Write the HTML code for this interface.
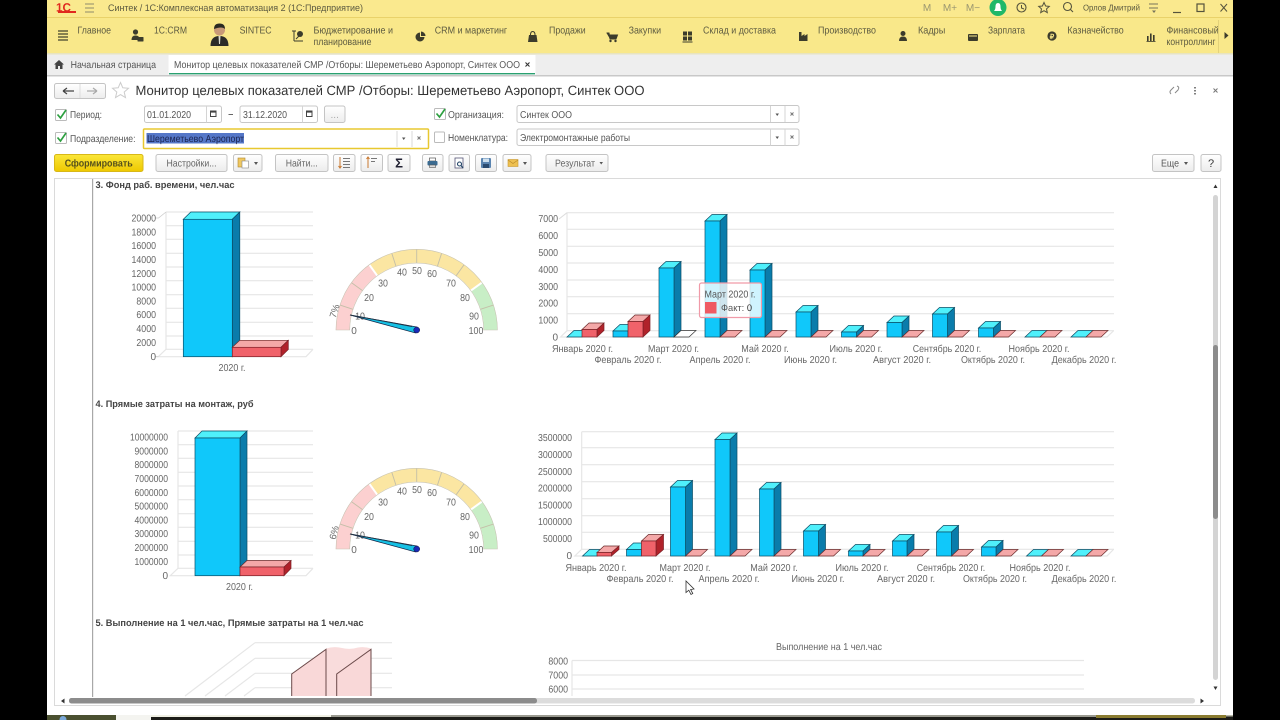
<!DOCTYPE html>
<html><head><meta charset="utf-8"><title>Монитор целевых показателей СМР</title>
<style>
html,body{margin:0;padding:0;background:#000;width:1280px;height:720px;overflow:hidden}
svg{display:block;filter:blur(.35px)}
text{font-family:"Liberation Sans",sans-serif;font-size:10px;fill:#555;text-rendering:geometricPrecision}
.p text,text.p{fill:#5c5a40}
.a{fill:#666;font-size:10px}
.a text{fill:#666;lengthAdjust:spacingAndGlyphs}
.e{text-anchor:end}.m{text-anchor:middle}
.t{font-weight:bold;fill:#444;font-size:9.5px}
.b{fill:url(#btn);stroke:#c4c4c4}
.i{fill:#fff;stroke:#c8c8c8}
.gl{stroke:#e6e6e6;stroke-width:1.2;fill:none}
.c1{fill:#10c8fa;stroke:#0b4d66;stroke-width:.7}
.c2{fill:#0a7cab;stroke:#0b4d66;stroke-width:.7}
.c3{fill:#4ff0fb;stroke:#0b4d66;stroke-width:.7}
.r1{fill:#f0626a;stroke:#7a2026;stroke-width:.7}
.r2{fill:#b0222a;stroke:#7a2026;stroke-width:.7}
.r3{fill:#f4a8a8;stroke:#6a2a2a;stroke-width:.7}
</style></head><body>
<svg width="1280" height="720" viewBox="0 0 1280 720" xmlns="http://www.w3.org/2000/svg">
<defs>
<linearGradient id="btn" x1="0" y1="0" x2="0" y2="1"><stop offset="0" stop-color="#fff"/><stop offset="1" stop-color="#ececec"/></linearGradient>
<linearGradient id="ybtn" x1="0" y1="0" x2="0" y2="1"><stop offset="0" stop-color="#fbe73a"/><stop offset="1" stop-color="#eec800"/></linearGradient>
<polygon id="fp" class="r3" points="0,0 7,-6.5 22,-6.5 15,0"/>
<polygon id="fc" class="c3" points="0,0 7,-6.5 22,-6.5 15,0"/>
<g id="gauge">
<path d="M342.7 330A74 74 0 0 1 373.2 270.1" fill="none" stroke="#fcd0d0" stroke-width="13.6"/>
<path d="M373.2 270.1A74 74 0 0 1 476.6 286.5" fill="none" stroke="#fbe6a2" stroke-width="13.6"/>
<path d="M476.6 286.5A74 74 0 0 1 490.7 330" fill="none" stroke="#c8eec6" stroke-width="13.6"/>
<path d="M353 309.3L340 305.1M362.5 290.6L351.4 282.6M396 266.3L391.8 253.3M416.7 263V249.3M437.4 266.3L441.6 253.3M456.1 275.8L464.1 264.7M480.4 309.3L493.4 305.1" stroke="#c4bfa8" stroke-width=".9"/>
<path d="M377.3 275.8L369.3 264.7M470.9 290.6L482 282.6" stroke="#fff" stroke-width="2"/>
<path d="M336 330A80.7 80.7 0 0 1 497.4 330H483.7A67 67 0 0 0 349.7 330Z" fill="none" stroke="#c8c4b4" stroke-width=".6"/>
</g>
</defs>

<!-- frame -->
<rect x="47" y="0" width="1186" height="715" fill="#fff"/>
<rect x="47" y="715" width="1186" height="1.5" fill="#b8b8a8"/>
<rect x="47" y="716.5" width="1186" height="3.5" fill="#1c1c18"/>
<rect x="47" y="715" width="69" height="5" fill="#4a5030"/>
<circle cx="63" cy="719.5" r="3.5" fill="#7aa8d8"/>
<rect x="116" y="715" width="35" height="5" fill="#f4f4f0"/>
<rect x="151" y="715" width="180" height="2" fill="#f0f0e4"/>
<rect x="331" y="715" width="765" height="2" fill="#9a9a90"/>
<rect x="1096" y="715" width="130" height="3" fill="#8a7c30"/>

<!-- title bar -->
<rect x="47" y="0" width="1186" height="17.5" fill="#fae98e"/>
<rect x="47" y="17" width="1186" height="1" fill="#e9d26a"/>
<text x="56" y="11.5" style="font-size:12px;font-weight:bold;fill:#e0281e" textLength="15" lengthAdjust="spacingAndGlyphs">1С</text>
<rect x="58" y="11" width="18" height="2" fill="#e0281e"/>
<path d="M85 4H94M85 8H94M85 12H94" stroke="#8d8a6c" stroke-width="1"/>
<text class="p" x="108" y="11" textLength="255" lengthAdjust="spacingAndGlyphs" style="font-size:9.5px">Синтек / 1С:Комплексная автоматизация 2  (1С:Предприятие)</text>
<text x="927" y="11" class="m" style="fill:#9a9670">M</text>
<text x="950" y="11" class="m" style="fill:#9a9670">M+</text>
<text x="973" y="11" class="m" style="fill:#9a9670">M−</text>
<circle cx="998" cy="7.5" r="8.5" fill="#20b868"/>
<path d="M994 11Q995.5 9.5 995.5 6.5Q995.5 3 998 3Q1000.5 3 1000.5 6.5Q1000.5 9.5 1002 11Z" fill="#fff"/>
<circle cx="1021.5" cy="7.5" r="4.5" fill="none" stroke="#55533c" stroke-width="1.1"/><path d="M1021.5 5V8L1024 9" stroke="#55533c" fill="none"/>
<polygon points="1044,2.5 1045.6,6 1049.3,6.4 1046.5,8.9 1047.3,12.6 1044,10.7 1040.7,12.6 1041.5,8.9 1038.7,6.4 1042.4,6" fill="none" stroke="#55533c"/>
<circle cx="1067.5" cy="6.5" r="4" fill="none" stroke="#55533c" stroke-width="1.1"/><path d="M1070.5 9.5L1073 12" stroke="#55533c" stroke-width="1.1"/>
<text class="p" x="1083" y="10.5" textLength="57" lengthAdjust="spacingAndGlyphs" style="font-size:8.5px">Орлов Дмитрий</text>
<path d="M1149 4H1158M1149 8H1158" stroke="#77745a"/><path d="M1152 10.5H1156L1154 13Z" fill="#77745a"/>
<path d="M1173 12.5H1181" stroke="#55533c" stroke-width="1.2"/>
<rect x="1197" y="4" width="7" height="7.5" fill="none" stroke="#55533c" stroke-width="1.2"/>
<path d="M1220.5 4L1227 11.5M1227 4L1220.5 11.5" stroke="#55533c" stroke-width="1"/>

<!-- sections panel -->
<rect x="47" y="18" width="1186" height="35.5" fill="#f9e88a"/>
<rect x="47" y="53" width="1186" height="1.5" fill="#e8e4c0"/>
<path d="M58 33H68M58 36H68M58 39H68M58 42H68" stroke="#44442f" stroke-width="1.3" transform="translate(0,-2)"/>
<g class="p">
<text x="77.5" y="33.5" textLength="33.5" lengthAdjust="spacingAndGlyphs">Главное</text>
<text x="154" y="33.5" textLength="33" lengthAdjust="spacingAndGlyphs">1С:CRM</text>
<text x="239.6" y="33.5" textLength="32" lengthAdjust="spacingAndGlyphs">SINTEC</text>
<text x="313.5" y="33.5" textLength="79.5" lengthAdjust="spacingAndGlyphs">Бюджетирование и</text>
<text x="313.5" y="45" textLength="58" lengthAdjust="spacingAndGlyphs">планирование</text>
<text x="434.7" y="33.5" textLength="72.5" lengthAdjust="spacingAndGlyphs">CRM и маркетинг</text>
<text x="549" y="33.5" textLength="36.7" lengthAdjust="spacingAndGlyphs">Продажи</text>
<text x="628.6" y="33.5" textLength="32.5" lengthAdjust="spacingAndGlyphs">Закупки</text>
<text x="703" y="33.5" textLength="73" lengthAdjust="spacingAndGlyphs">Склад и доставка</text>
<text x="818" y="33.5" textLength="58" lengthAdjust="spacingAndGlyphs">Производство</text>
<text x="918" y="33.5" textLength="27.3" lengthAdjust="spacingAndGlyphs">Кадры</text>
<text x="988" y="33.5" textLength="37" lengthAdjust="spacingAndGlyphs">Зарплата</text>
<text x="1067.4" y="33.5" textLength="56.3" lengthAdjust="spacingAndGlyphs">Казначейство</text>
<text x="1166.5" y="33.5" textLength="52.3" lengthAdjust="spacingAndGlyphs">Финансовый</text>
<text x="1166.5" y="45" textLength="49" lengthAdjust="spacingAndGlyphs">контроллинг</text>
</g>
<!-- panel icons -->
<g fill="#3c3c2c">
<circle cx="135.5" cy="32" r="2.6"/><path d="M131.5 40Q131.5 35.5 135.5 35.5Q138 35.5 139 37V40Z"/><rect x="137.5" y="37" width="6" height="4.5" rx=".5"/>
<circle cx="219.5" cy="30" r="5.5" fill="#c89a78"/><path d="M214 29Q214 23.5 219.5 23.5Q225 23.5 225 29Q222 26 214 29Z" fill="#2a2a22"/><path d="M210.5 46Q210.5 36 219.5 36Q228.5 36 228.5 46Z" fill="#2c2c28"/><path d="M218.5 36H220.5L220 44H219Z" fill="#dcdcd0"/>
<path d="M294 31V41M294 41H303M296 31H292" stroke="#3c3c2c" stroke-width="1" fill="none"/><circle cx="300" cy="34" r="3"/><path d="M296 39L299 36" stroke="#3c3c2c"/>
<path d="M420 32.5A4.5 4.5 0 1 0 424.5 37H420Z"/><path d="M421 31.5A4.5 4.5 0 0 1 425.5 36H421Z"/>
<path d="M529 35H536.5L537.5 42H528Z"/><path d="M530.5 35Q530.5 31.5 532.7 31.5Q535 31.5 535 35" fill="none" stroke="#3c3c2c"/>
<path d="M606.5 33H609L610 39H616L617.5 35H609.5L610 39" stroke="#3c3c2c" fill="#3c3c2c"/><circle cx="610.5" cy="41" r="1.2"/><circle cx="615.5" cy="41" r="1.2"/>
<rect x="683" y="31.5" width="4" height="4"/><rect x="688" y="31.5" width="4" height="4"/><rect x="683" y="36.5" width="4" height="4"/><rect x="688" y="36.5" width="4" height="4"/><rect x="682.5" y="41.5" width="10" height="1"/>
<path d="M799 41V32H801.5V36L804.5 34V36L807.5 34V41Z"/>
<circle cx="903" cy="33.5" r="2.5"/><path d="M899 41Q899 36.5 903 36.5Q907 36.5 907 41Z"/>
<rect x="968" y="34" width="10" height="7" rx="1"/><rect x="969" y="35.5" width="8" height="1" fill="#f9e88a"/>
<circle cx="1052" cy="36" r="4.6"/><text x="1052" y="39" class="m" style="font-size:7px;font-weight:bold;fill:#f9e88a">₽</text>
<rect x="1147" y="36" width="1.6" height="5"/><rect x="1150" y="33.5" width="1.6" height="7.5"/><rect x="1153" y="35" width="1.6" height="6"/><rect x="1146.5" y="41" width="9" height=".8"/>
</g>
<rect x="1218" y="20" width="1" height="33" fill="#e3d27a"/>
<path d="M1224.5 32L1228.5 35.5L1224.5 39Z" fill="#3c3c2c"/>

<!-- tabs -->
<rect x="47" y="54.5" width="1186" height="21" fill="#eeeeee"/>
<rect x="47" y="75" width="1186" height="1.5" fill="#c8c8c8"/>
<path d="M59 60L64 64.5H62.5V69H60V66H58V69H55.5V64.5H54Z" fill="#444"/>
<text x="70.6" y="68" textLength="85.4" lengthAdjust="spacingAndGlyphs">Начальная страница</text>
<rect x="168.5" y="55" width="367" height="20" fill="#fff"/>
<rect x="169" y="73" width="366" height="1.4" fill="#2aa070"/>
<text x="174" y="68" textLength="346" lengthAdjust="spacingAndGlyphs">Монитор целевых показателей СМР /Отборы: Шереметьево Аэропорт, Синтек ООО</text>
<path d="M525.5 62.5L529.5 66.5M529.5 62.5L525.5 66.5" stroke="#333" stroke-width="1.1"/>

<!-- title row -->
<rect x="54.5" y="83.5" width="51" height="15" rx="2" class="b"/>
<path d="M80 84V98" stroke="#ddd"/>
<path d="M63 91H74M63 91L67 88M63 91L67 94" stroke="#444" stroke-width="1.2" fill="none"/>
<path d="M87 91H97M97 91L93 88M97 91L93 94" stroke="#aaa" stroke-width="1.2" fill="none"/>
<polygon points="120.5,82.5 122.8,87.8 128.5,88.3 124.2,92 125.5,97.6 120.5,94.6 115.5,97.6 116.8,92 112.5,88.3 118.2,87.8" fill="none" stroke="#ccc"/>
<text x="135.5" y="95" textLength="509" lengthAdjust="spacingAndGlyphs" style="font-size:13.5px;fill:#333">Монитор целевых показателей СМР /Отборы: Шереметьево Аэропорт, Синтек ООО</text>
<path d="M1171 94Q1169 92 1171 90L1174 87M1177 86Q1180 87 1178 90L1175 93" fill="none" stroke="#888"/>
<path d="M1195 87V88.5M1195 90V91.5M1195 93V94.5" stroke="#555" stroke-width="1.5"/>
<path d="M1213.5 88.5L1217.5 92.5M1217.5 88.5L1213.5 92.5" stroke="#777"/>

<!-- row 1 -->
<rect x="55.5" y="109.5" width="11" height="11" rx="1" fill="#fff" stroke="#bbb"/>
<path d="M57.5 114.5L60.5 118L66 110" fill="none" stroke="#2da040" stroke-width="1.7"/>
<text x="70" y="118" textLength="32" lengthAdjust="spacingAndGlyphs">Период:</text>
<rect x="144.5" y="106" width="77" height="16.5" rx="2" class="i"/>
<path d="M206.5 106V122.5" stroke="#d4d4d4"/>
<rect x="210.5" y="111" width="5.5" height="5.5" fill="none" stroke="#444"/><rect x="210.5" y="111" width="5.5" height="1.6" fill="#444"/>
<text x="147" y="118" textLength="44" lengthAdjust="spacingAndGlyphs">01.01.2020</text>
<path d="M228.5 114.5H233" stroke="#666"/>
<rect x="240" y="106" width="77.5" height="16.5" rx="2" class="i"/>
<path d="M302.5 106V122.5" stroke="#d4d4d4"/>
<rect x="306.5" y="111" width="5.5" height="5.5" fill="none" stroke="#444"/><rect x="306.5" y="111" width="5.5" height="1.6" fill="#444"/>
<text x="243" y="118" textLength="44" lengthAdjust="spacingAndGlyphs">31.12.2020</text>
<rect x="324.5" y="106" width="20.5" height="16.5" rx="2" class="b"/>
<text x="334.7" y="118" class="m" style="fill:#aaa">...</text>
<rect x="434.5" y="108.5" width="11" height="11" rx="1" fill="#fff" stroke="#bbb"/>
<path d="M436.5 113.5L439.5 117L445 109" fill="none" stroke="#2da040" stroke-width="1.7"/>
<text x="448" y="118" textLength="56" lengthAdjust="spacingAndGlyphs">Организация:</text>
<rect x="517" y="105.5" width="282" height="17" rx="2" class="i"/>
<path d="M770.5 106V122M785 106V122" stroke="#d4d4d4"/>
<path d="M775.5 113.5H779L777.2 116Z" fill="#555"/>
<path d="M790.5 112.5L793.5 115.5M793.5 112.5L790.5 115.5" stroke="#777"/>
<text x="520" y="118" textLength="52" lengthAdjust="spacingAndGlyphs">Синтек ООО</text>

<!-- row 2 -->
<rect x="55.5" y="132.5" width="11" height="11" rx="1" fill="#fff" stroke="#bbb"/>
<path d="M57.5 137.5L60.5 141L66 133" fill="none" stroke="#2da040" stroke-width="1.7"/>
<text x="70" y="142" textLength="65.5" lengthAdjust="spacingAndGlyphs">Подразделение:</text>
<rect x="143.5" y="129" width="285" height="19.5" rx="1" fill="#fff" stroke="#e8c830" stroke-width="1.5"/>
<rect x="146.5" y="133" width="97.5" height="10.5" fill="#5577c8"/>
<text x="147" y="141.8" textLength="97" lengthAdjust="spacingAndGlyphs" style="fill:#1a2450">Шереметьево Аэропорт</text>
<path d="M397 131V147M412 131V147" stroke="#d8d8d8"/>
<path d="M402 137.5H405.5L403.7 140Z" fill="#555"/>
<path d="M417.5 136.5L420.5 139.5M420.5 136.5L417.5 139.5" stroke="#777"/>
<rect x="434.5" y="132" width="10" height="10.5" rx="1" fill="#fff" stroke="#bbb"/>
<text x="448" y="141" textLength="60" lengthAdjust="spacingAndGlyphs">Номенклатура:</text>
<rect x="517" y="129" width="282" height="16.5" rx="2" class="i"/>
<path d="M770.5 129V145.5M785 129V145.5" stroke="#d4d4d4"/>
<path d="M775.5 136.5H779L777.2 139Z" fill="#555"/>
<path d="M790.5 135.5L793.5 138.5M793.5 135.5L790.5 138.5" stroke="#777"/>
<text x="520" y="141" textLength="110" lengthAdjust="spacingAndGlyphs">Электромонтажные работы</text>

<!-- toolbar -->
<rect x="54.5" y="154.5" width="88.5" height="17" rx="2" fill="url(#ybtn)" stroke="#d8b818"/>
<text x="98.7" y="166.5" class="m" textLength="68" lengthAdjust="spacingAndGlyphs" style="font-weight:bold;fill:#55501c">Сформировать</text>
<rect x="156" y="154.5" width="71" height="17" rx="2" class="b"/>
<text x="191.5" y="166.5" class="m" textLength="50" lengthAdjust="spacingAndGlyphs" style="fill:#666">Настройки...</text>
<rect x="233.5" y="154.5" width="28.5" height="17" rx="2" class="b"/>
<rect x="238" y="158" width="7" height="9" fill="#f0c860" stroke="#b08830" stroke-width=".6"/><rect x="242" y="161" width="6.5" height="7" fill="#fff" stroke="#888" stroke-width=".6"/>
<path d="M254 162H258L256 165Z" fill="#555"/>
<rect x="275.5" y="154.5" width="52.5" height="17" rx="2" class="b"/>
<text x="301.7" y="166.5" class="m" textLength="32" lengthAdjust="spacingAndGlyphs" style="fill:#666">Найти...</text>
<rect x="333.5" y="154.5" width="21.5" height="17" rx="2" class="b"/>
<path d="M340 157V168M338.5 166L340 168L341.5 166" stroke="#c87830" fill="none"/><path d="M343 158.5H350M343 161.5H350M343 164.5H350M343 167.5H350" stroke="#777"/>
<rect x="361" y="154.5" width="21.5" height="17" rx="2" class="b"/>
<path d="M368 157V168M366.5 159L368 157L369.5 159" stroke="#c87830" fill="none"/><path d="M371 158.5H377M371 161.5H375" stroke="#777"/>
<rect x="388" y="154.5" width="22" height="17" rx="2" class="b"/>
<text x="399" y="167.5" class="m" style="font-size:13px;font-weight:bold;fill:#223">Σ</text>
<rect x="422.5" y="154.5" width="20.5" height="17" rx="2" class="b"/>
<rect x="429.5" y="158" width="6" height="3" fill="#fff" stroke="#555" stroke-width=".7"/><rect x="427.5" y="161" width="10" height="4.5" rx="1" fill="#3a6a90"/><rect x="429.5" y="165" width="6" height="2.5" fill="#ddd" stroke="#555" stroke-width=".6"/>
<rect x="449" y="154.5" width="20.5" height="17" rx="2" class="b"/>
<rect x="455" y="158" width="8" height="10" fill="#fff" stroke="#557" stroke-width=".8"/><circle cx="459.5" cy="164" r="2" fill="none" stroke="#246" stroke-width="1.1"/><path d="M461 165.5L463 168" stroke="#246" stroke-width="1.1"/>
<rect x="475.5" y="154.5" width="21" height="17" rx="2" class="b"/>
<rect x="481" y="158" width="10" height="10" rx="1" fill="#5a84b0"/><rect x="483" y="158.5" width="6" height="3.5" fill="#cfe0ee"/><rect x="483" y="164" width="6" height="4" fill="#2a4a70"/>
<rect x="503" y="154.5" width="28" height="17" rx="2" class="b"/>
<rect x="508" y="159.5" width="10" height="7" fill="#eec050" stroke="#c89830" stroke-width=".6"/><path d="M508 160L513 163.5L518 160" fill="none" stroke="#b88828" stroke-width=".7"/>
<path d="M523 162H527L525 165Z" fill="#555"/>
<rect x="546" y="154.5" width="62" height="17" rx="2" class="b"/>
<text x="555" y="166.5" textLength="40" lengthAdjust="spacingAndGlyphs" style="fill:#666">Результат</text>
<path d="M599.5 162H603L601.2 164.5Z" fill="#555"/>
<rect x="1152.5" y="154.5" width="41.5" height="17" rx="2" class="b"/>
<text x="1161" y="166.5" textLength="18" lengthAdjust="spacingAndGlyphs" style="fill:#555">Еще</text>
<path d="M1184 162H1188L1186 165Z" fill="#555"/>
<rect x="1201" y="154.5" width="20" height="17" rx="2" class="b"/>
<text x="1211" y="167" class="m" style="fill:#333;font-size:11px">?</text>

<!-- content frame -->
<rect x="54.5" y="178.5" width="1166" height="527" fill="#fff" stroke="#dadada"/>
<rect x="92" y="179" width="1.2" height="518" fill="#a8a8a8"/>

<!-- section titles -->
<text x="95.5" y="188" class="t" textLength="139" lengthAdjust="spacingAndGlyphs">3. Фонд раб. времени, чел.час</text>
<text x="95.5" y="407" class="t" textLength="158" lengthAdjust="spacingAndGlyphs">4. Прямые затраты на монтаж, руб</text>
<text x="95.5" y="626" class="t" textLength="268" lengthAdjust="spacingAndGlyphs">5. Выполнение на 1 чел.час, Прямые затраты на 1 чел.час</text>

<!-- left chart 1 -->
<g id="lg">
<path class="gl" d="M166 212H313M166 225.7H313M166 239.3H313M166 253.3H313M166 267H313M166 280.7H313M166 294.7H313M166 308.3H313M166 322.3H313M166 336H313M166 349.3H313"/>
<path class="gl" d="M166 212V349.3L158.3 356.7H306L313 349.3"/>
<path d="M155 218H158.5L166 212M155 356.7H158.5" fill="none" stroke="#ccc" stroke-width=".8"/>
</g>
<g class="a e">
<text x="156" y="221.5" textLength="24.5" lengthAdjust="spacingAndGlyphs">20000</text><text x="156" y="235.4" textLength="24.5" lengthAdjust="spacingAndGlyphs">18000</text><text x="156" y="249.2" textLength="24.5" lengthAdjust="spacingAndGlyphs">16000</text><text x="156" y="263" textLength="24.5" lengthAdjust="spacingAndGlyphs">14000</text><text x="156" y="276.8" textLength="24.5" lengthAdjust="spacingAndGlyphs">12000</text><text x="156" y="290.6" textLength="24.5" lengthAdjust="spacingAndGlyphs">10000</text><text x="156" y="304.4" textLength="19.6" lengthAdjust="spacingAndGlyphs">8000</text><text x="156" y="318.2" textLength="19.6" lengthAdjust="spacingAndGlyphs">6000</text><text x="156" y="332" textLength="19.6" lengthAdjust="spacingAndGlyphs">4000</text><text x="156" y="346" textLength="19.6" lengthAdjust="spacingAndGlyphs">2000</text><text x="156" y="360">0</text>
</g>
<polygon class="c3" points="183.3,219.3 190.8,212 239.8,212 232.3,219.3"/>
<polygon class="c2" points="232.3,219.3 239.8,212 239.8,349.5 232.3,356.7"/>
<rect class="c1" x="183.3" y="219.3" width="49" height="137.4"/>
<polygon class="r3" points="232.3,347.3 239.8,340.3 288.3,340.3 281,347.3"/>
<polygon class="r2" points="281,347.3 288.3,340.3 288.3,349.5 281,356.7"/>
<rect class="r1" x="232.3" y="347.3" width="48.7" height="9.4"/>
<text x="232" y="371" class="a m" textLength="27" lengthAdjust="spacingAndGlyphs">2020 г.</text>

<!-- gauge 1 -->
<use href="#gauge"/>
<g class="a m">
<text x="354" y="334">0</text><text x="360" y="319.5" textLength="9.8" lengthAdjust="spacingAndGlyphs">10</text><text x="369" y="301" textLength="9.8" lengthAdjust="spacingAndGlyphs">20</text><text x="383" y="286.5" textLength="9.8" lengthAdjust="spacingAndGlyphs">30</text><text x="402" y="275.5" textLength="9.8" lengthAdjust="spacingAndGlyphs">40</text><text x="417" y="274" textLength="9.8" lengthAdjust="spacingAndGlyphs">50</text><text x="432" y="277" textLength="9.8" lengthAdjust="spacingAndGlyphs">60</text><text x="451" y="286.5" textLength="9.8" lengthAdjust="spacingAndGlyphs">70</text><text x="465" y="301" textLength="9.8" lengthAdjust="spacingAndGlyphs">80</text><text x="474" y="319.5" textLength="9.8" lengthAdjust="spacingAndGlyphs">90</text><text x="476" y="334" textLength="14.7" lengthAdjust="spacingAndGlyphs">100</text>
</g>
<text transform="translate(335.5,318.5) rotate(-72)" style="font-size:9.5px;fill:#666">7%</text>
<polygon points="350,315 417,327 415.5,333" fill="#16c0e4" stroke="#124" stroke-width=".7"/>
<path d="M350 315L412 326.5" stroke="#234" stroke-width=".9"/>
<circle cx="416.7" cy="330" r="3" fill="#1a2ab8" stroke="#113" stroke-width=".5"/>

<!-- right chart 1 -->
<path class="gl" d="M567 212.7H1114M567 229.3H1114M567 246.3H1114M567 263H1114M567 280H1114M567 296.7H1114M567 313.7H1114M567 330.7H1114"/>
<path class="gl" d="M567 212.7V330.7L560.6 337H1107L1113.6 330.7"/>
<path d="M559 219L567 212.7" stroke="#ddd"/>
<g class="a e">
<text x="558" y="222" textLength="19.6" lengthAdjust="spacingAndGlyphs">7000</text><text x="558" y="239" textLength="19.6" lengthAdjust="spacingAndGlyphs">6000</text><text x="558" y="256" textLength="19.6" lengthAdjust="spacingAndGlyphs">5000</text><text x="558" y="273" textLength="19.6" lengthAdjust="spacingAndGlyphs">4000</text><text x="558" y="290" textLength="19.6" lengthAdjust="spacingAndGlyphs">3000</text><text x="558" y="306.5" textLength="19.6" lengthAdjust="spacingAndGlyphs">2000</text><text x="558" y="323.5" textLength="19.6" lengthAdjust="spacingAndGlyphs">1000</text><text x="558" y="340.5">0</text>
</g>
<use href="#fc" x="567" y="337"/>
<polygon class="r3" points="582,329.5 589,323 604,323 597,329.5"/><polygon class="r2" points="597,329.5 604,323 604,330.5 597,337"/><rect class="r1" x="582" y="329.5" width="15" height="7.5"/>
<polygon class="c3" points="613,331 620,324.5 635,324.5 628,331"/><rect class="c1" x="613" y="331" width="15" height="6"/>
<polygon class="r3" points="628,321.5 635,315 650,315 643,321.5"/><polygon class="r2" points="643,321.5 650,315 650,330.5 643,337"/><rect class="r1" x="628" y="321.5" width="15" height="15.5"/>
<polygon class="c3" points="659,268 666,261.5 681,261.5 674,268"/><polygon class="c2" points="674,268 681,261.5 681,330.5 674,337"/><rect class="c1" x="659" y="268" width="15" height="69"/>
<polygon points="674,337 681,330.5 696,330.5 689,337" fill="#fff" stroke="#333" stroke-width=".7"/>
<polygon class="c3" points="705,221 712,214.5 727,214.5 720,221"/><polygon class="c2" points="720,221 727,214.5 727,330.5 720,337"/><rect class="c1" x="705" y="221" width="15" height="116"/>
<use href="#fp" x="720" y="337"/>
<polygon class="c3" points="750,270 757,263.5 772,263.5 765,270"/><polygon class="c2" points="765,270 772,263.5 772,330.5 765,337"/><rect class="c1" x="750" y="270" width="15" height="67"/>
<use href="#fp" x="765" y="337"/>
<polygon class="c3" points="796,312 803,305.5 818,305.5 811,312"/><polygon class="c2" points="811,312 818,305.5 818,330.5 811,337"/><rect class="c1" x="796" y="312" width="15" height="25"/>
<use href="#fp" x="811" y="337"/>
<polygon class="c3" points="841.5,332 848.5,325.5 863.5,325.5 856.5,332"/><polygon class="c2" points="856.5,332 863.5,325.5 863.5,330.5 856.5,337"/><rect class="c1" x="841.5" y="332" width="15" height="5"/>
<use href="#fp" x="856.5" y="337"/>
<polygon class="c3" points="887,322.5 894,316 909,316 902,322.5"/><polygon class="c2" points="902,322.5 909,316 909,330.5 902,337"/><rect class="c1" x="887" y="322.5" width="15" height="14.5"/>
<use href="#fp" x="902" y="337"/>
<polygon class="c3" points="932.5,314 939.5,307.5 954.5,307.5 947.5,314"/><polygon class="c2" points="947.5,314 954.5,307.5 954.5,330.5 947.5,337"/><rect class="c1" x="932.5" y="314" width="15" height="23"/>
<use href="#fp" x="947.5" y="337"/>
<polygon class="c3" points="978.5,328 985.5,321.5 1000.5,321.5 993.5,328"/><polygon class="c2" points="993.5,328 1000.5,321.5 1000.5,330.5 993.5,337"/><rect class="c1" x="978.5" y="328" width="15" height="9"/>
<use href="#fp" x="993.5" y="337"/>
<use href="#fc" x="1025" y="337"/><use href="#fp" x="1040" y="337"/>
<use href="#fc" x="1071" y="337"/><use href="#fp" x="1086" y="337"/>
<rect x="699.5" y="283" width="62" height="34.5" rx="2" fill="#fff" fill-opacity=".8" stroke="#f09aa8" stroke-width="1.2"/>
<text x="704.5" y="297.5" textLength="51" lengthAdjust="spacingAndGlyphs" style="fill:#555">Март 2020 г.</text>
<rect x="705" y="302" width="11.5" height="11.5" fill="#ef5b63"/>
<text x="721" y="311" style="font-size:9.5px" textLength="31" lengthAdjust="spacingAndGlyphs">Факт: <tspan style="fill:#333">0</tspan></text>
<g class="a m">
<text x="582.5" y="352" textLength="61" lengthAdjust="spacingAndGlyphs">Январь 2020 г.</text><text x="673.5" y="352" textLength="51" lengthAdjust="spacingAndGlyphs">Март 2020 г.</text><text x="765" y="352" textLength="47.5" lengthAdjust="spacingAndGlyphs">Май 2020 г.</text><text x="856" y="352" textLength="53" lengthAdjust="spacingAndGlyphs">Июль 2020 г.</text><text x="947" y="352" textLength="68.5" lengthAdjust="spacingAndGlyphs">Сентябрь 2020 г.</text><text x="1039" y="352" textLength="61" lengthAdjust="spacingAndGlyphs">Ноябрь 2020 г.</text>
<text x="628" y="363" textLength="67" lengthAdjust="spacingAndGlyphs">Февраль 2020 г.</text><text x="720" y="363" textLength="61" lengthAdjust="spacingAndGlyphs">Апрель 2020 г.</text><text x="810.5" y="363" textLength="53" lengthAdjust="spacingAndGlyphs">Июнь 2020 г.</text><text x="902" y="363" textLength="58" lengthAdjust="spacingAndGlyphs">Август 2020 г.</text><text x="993" y="363" textLength="64" lengthAdjust="spacingAndGlyphs">Октябрь 2020 г.</text><text x="1084" y="363" textLength="64.7" lengthAdjust="spacingAndGlyphs">Декабрь 2020 г.</text>
</g>

<!-- left chart 2 -->
<g transform="translate(12,219)">
<path class="gl" d="M166 212H301M166 225.7H301M166 239.3H301M166 253.3H301M166 267H301M166 280.7H301M166 294.7H301M166 308.3H301M166 322.3H301M166 336H301M166 349.3H301"/>
<path class="gl" d="M166 212V349.3L158.3 356.7H294L301 349.3"/>
</g>
<g class="a e">
<text x="168" y="440.5" textLength="38" lengthAdjust="spacingAndGlyphs">10000000</text><text x="168" y="454.4" textLength="33.5" lengthAdjust="spacingAndGlyphs">9000000</text><text x="168" y="468.2" textLength="33.5" lengthAdjust="spacingAndGlyphs">8000000</text><text x="168" y="482" textLength="33.5" lengthAdjust="spacingAndGlyphs">7000000</text><text x="168" y="495.8" textLength="33.5" lengthAdjust="spacingAndGlyphs">6000000</text><text x="168" y="509.6" textLength="33.5" lengthAdjust="spacingAndGlyphs">5000000</text><text x="168" y="523.4" textLength="33.5" lengthAdjust="spacingAndGlyphs">4000000</text><text x="168" y="537.2" textLength="33.5" lengthAdjust="spacingAndGlyphs">3000000</text><text x="168" y="551" textLength="33.5" lengthAdjust="spacingAndGlyphs">2000000</text><text x="168" y="565" textLength="33.5" lengthAdjust="spacingAndGlyphs">1000000</text><text x="168" y="579">0</text>
</g>
<polygon class="c3" points="195,438 202,431 247,431 240,438"/>
<polygon class="c2" points="240,438 247,431 247,568.5 240,575.7"/>
<rect class="c1" x="195" y="438" width="45" height="137.7"/>
<polygon class="r3" points="240,567 247,560.5 291,560.5 284,567"/>
<polygon class="r2" points="284,567 291,560.5 291,568.5 284,575.7"/>
<rect class="r1" x="240" y="567" width="44" height="8.7"/>
<text x="239.5" y="590" class="a m" textLength="27" lengthAdjust="spacingAndGlyphs">2020 г.</text>

<!-- gauge 2 -->
<use href="#gauge" y="219"/>
<g class="a m">
<text x="354" y="553">0</text><text x="360" y="538.5" textLength="9.8" lengthAdjust="spacingAndGlyphs">10</text><text x="369" y="520" textLength="9.8" lengthAdjust="spacingAndGlyphs">20</text><text x="383" y="505.5" textLength="9.8" lengthAdjust="spacingAndGlyphs">30</text><text x="402" y="494.5" textLength="9.8" lengthAdjust="spacingAndGlyphs">40</text><text x="417" y="493" textLength="9.8" lengthAdjust="spacingAndGlyphs">50</text><text x="432" y="496" textLength="9.8" lengthAdjust="spacingAndGlyphs">60</text><text x="451" y="505.5" textLength="9.8" lengthAdjust="spacingAndGlyphs">70</text><text x="465" y="520" textLength="9.8" lengthAdjust="spacingAndGlyphs">80</text><text x="474" y="538.5" textLength="9.8" lengthAdjust="spacingAndGlyphs">90</text><text x="476" y="553" textLength="14.7" lengthAdjust="spacingAndGlyphs">100</text>
</g>
<text transform="translate(335.5,540) rotate(-76)" style="font-size:9.5px;fill:#666">6%</text>
<polygon points="350,534 417,546 415.5,552" fill="#16c0e4" stroke="#124" stroke-width=".7"/>
<path d="M350 534L412 545.5" stroke="#234" stroke-width=".9"/>
<circle cx="416.7" cy="549" r="3" fill="#1a2ab8" stroke="#113" stroke-width=".5"/>

<!-- right chart 2 -->
<path class="gl" d="M581.7 431.7H1114M581.7 447.7H1114M581.7 464.7H1114M581.7 481.7H1114M581.7 498.7H1114M581.7 515.7H1114M581.7 532.3H1114M581.7 549.3H1114"/>
<path class="gl" d="M581.7 431.7V549.3L574.8 556H1107L1113.6 549.3"/>
<g class="a e">
<text x="572" y="441" textLength="34" lengthAdjust="spacingAndGlyphs">3500000</text><text x="572" y="458" textLength="34" lengthAdjust="spacingAndGlyphs">3000000</text><text x="572" y="475" textLength="34" lengthAdjust="spacingAndGlyphs">2500000</text><text x="572" y="491.5" textLength="34" lengthAdjust="spacingAndGlyphs">2000000</text><text x="572" y="508.5" textLength="34" lengthAdjust="spacingAndGlyphs">1500000</text><text x="572" y="525" textLength="34" lengthAdjust="spacingAndGlyphs">1000000</text><text x="572" y="542" textLength="29" lengthAdjust="spacingAndGlyphs">500000</text><text x="572" y="559">0</text>
</g>
<use href="#fc" x="582.5" y="556"/>
<polygon class="r3" points="597,552.5 604,546 619,546 611.5,552.5"/><polygon class="r2" points="611.5,552.5 619,546 619,549.5 611.5,556"/><rect class="r1" x="597" y="552.5" width="14.5" height="3.5"/>
<polygon class="c3" points="626.5,549.5 633.5,543 648.5,543 641.5,549.5"/><rect class="c1" x="626.5" y="549.5" width="15" height="6.5"/>
<polygon class="r3" points="641.5,541 648.5,534.5 663.5,534.5 656,541"/><polygon class="r2" points="656,541 663.5,534.5 663.5,549.5 656,556"/><rect class="r1" x="641.5" y="541" width="14.5" height="15"/>
<polygon class="c3" points="670.5,487 677.5,480.5 692.5,480.5 685.5,487"/><polygon class="c2" points="685.5,487 692.5,480.5 692.5,549.5 685.5,556"/><rect class="c1" x="670.5" y="487" width="15" height="69"/>
<use href="#fp" x="685.5" y="556"/>
<polygon class="c3" points="715,439.5 722,433 737,433 730,439.5"/><polygon class="c2" points="730,439.5 737,433 737,549.5 730,556"/><rect class="c1" x="715" y="439.5" width="15" height="116.5"/>
<use href="#fp" x="730" y="556"/>
<polygon class="c3" points="759.5,489 766.5,482.5 781,482.5 774,489"/><polygon class="c2" points="774,489 781,482.5 781,549.5 774,556"/><rect class="c1" x="759.5" y="489" width="14.5" height="67"/>
<use href="#fp" x="774" y="556"/>
<polygon class="c3" points="803.5,531 810.5,524.5 825.5,524.5 818.5,531"/><polygon class="c2" points="818.5,531 825.5,524.5 825.5,549.5 818.5,556"/><rect class="c1" x="803.5" y="531" width="15" height="25"/>
<use href="#fp" x="818.5" y="556"/>
<polygon class="c3" points="848.5,551 855.5,544.5 870,544.5 863,551"/><polygon class="c2" points="863,551 870,544.5 870,549.5 863,556"/><rect class="c1" x="848.5" y="551" width="14.5" height="5"/>
<use href="#fp" x="863" y="556"/>
<polygon class="c3" points="892.5,541 899.5,534.5 914,534.5 907,541"/><polygon class="c2" points="907,541 914,534.5 914,549.5 907,556"/><rect class="c1" x="892.5" y="541" width="14.5" height="15"/>
<use href="#fp" x="907" y="556"/>
<polygon class="c3" points="936.5,532 943.5,525.5 958.5,525.5 951.5,532"/><polygon class="c2" points="951.5,532 958.5,525.5 958.5,549.5 951.5,556"/><rect class="c1" x="936.5" y="532" width="15" height="24"/>
<use href="#fp" x="951.5" y="556"/>
<polygon class="c3" points="981.5,547 988.5,540.5 1003,540.5 996,547"/><polygon class="c2" points="996,547 1003,540.5 1003,549.5 996,556"/><rect class="c1" x="981.5" y="547" width="14.5" height="9"/>
<use href="#fp" x="996" y="556"/>
<use href="#fc" x="1026.5" y="556"/><use href="#fp" x="1041.5" y="556"/>
<use href="#fc" x="1071" y="556"/><use href="#fp" x="1086" y="556"/>
<g class="a m">
<text x="596" y="571" textLength="61" lengthAdjust="spacingAndGlyphs">Январь 2020 г.</text><text x="685" y="571" textLength="51" lengthAdjust="spacingAndGlyphs">Март 2020 г.</text><text x="774" y="571" textLength="47.5" lengthAdjust="spacingAndGlyphs">Май 2020 г.</text><text x="862" y="571" textLength="53" lengthAdjust="spacingAndGlyphs">Июль 2020 г.</text><text x="951" y="571" textLength="68.5" lengthAdjust="spacingAndGlyphs">Сентябрь 2020 г.</text><text x="1040" y="571" textLength="61" lengthAdjust="spacingAndGlyphs">Ноябрь 2020 г.</text>
<text x="640" y="582" textLength="67" lengthAdjust="spacingAndGlyphs">Февраль 2020 г.</text><text x="729" y="582" textLength="61" lengthAdjust="spacingAndGlyphs">Апрель 2020 г.</text><text x="818" y="582" textLength="53" lengthAdjust="spacingAndGlyphs">Июнь 2020 г.</text><text x="906" y="582" textLength="58" lengthAdjust="spacingAndGlyphs">Август 2020 г.</text><text x="995" y="582" textLength="64" lengthAdjust="spacingAndGlyphs">Октябрь 2020 г.</text><text x="1084" y="582" textLength="64.7" lengthAdjust="spacingAndGlyphs">Декабрь 2020 г.</text>
</g>
<path d="M686 581V592.5L688.8 590.2L691 594.5L692.8 593.5L690.6 589.5L694 589Z" fill="#fff" stroke="#333" stroke-width=".8"/>

<!-- section 5 -->
<path class="gl" d="M255 642.7H392M255 658.3H392M255 673.3H392M255 687.7H392M255 642.7L185 696M255 658.3L205 696M255 673.3L225 696M255 687.7L244 696"/>
<path d="M326 648.5Q334 646 342 648Q350 650 358 647.5Q365 646.5 371 648.5V696H326Z" fill="#f9dcdc"/>
<polygon points="291.7,696 291.7,674 326,649.3 326,696" fill="#f9d8d8"/>
<polygon points="336.7,696 336.7,674 371,649.3 371,696" fill="#f9d8d8"/>
<path d="M291.7 696V674L326 649.3V696M336.7 696V674L371 649.3V696" fill="none" stroke="#6b4a4a" stroke-width="1"/>
<text x="829" y="650" class="a m" textLength="106" lengthAdjust="spacingAndGlyphs">Выполнение на 1 чел.час</text>
<g class="a e"><text x="568" y="664.5" textLength="19.6" lengthAdjust="spacingAndGlyphs">8000</text><text x="568" y="678.5" textLength="19.6" lengthAdjust="spacingAndGlyphs">7000</text><text x="568" y="692.5" textLength="19.6" lengthAdjust="spacingAndGlyphs">6000</text></g>
<path class="gl" d="M572 660.5H1084M572 675H1084M572 689H1084M572 660.5V696"/>

<!-- scrollbars -->
<rect x="69" y="698" width="1126" height="5.5" rx="2.5" fill="#dcdcdc"/>
<rect x="69" y="698" width="468" height="5.5" rx="2.5" fill="#8c8c8c"/>
<path d="M61 701L64.5 698.5V703.5Z" fill="#333"/>
<path d="M1204 701L1200.5 698.5V703.5Z" fill="#333"/>
<rect x="1213" y="195" width="5" height="485" rx="2.5" fill="#d4d4d4"/>
<rect x="1213" y="345" width="5" height="174" rx="2.5" fill="#8c8c8c"/>
<path d="M1213.5 188L1215.5 184.5L1217.5 188Z" fill="#333"/>
<path d="M1213.5 686.5L1215.5 690L1217.5 686.5Z" fill="#333"/>
</svg>
</body></html>
